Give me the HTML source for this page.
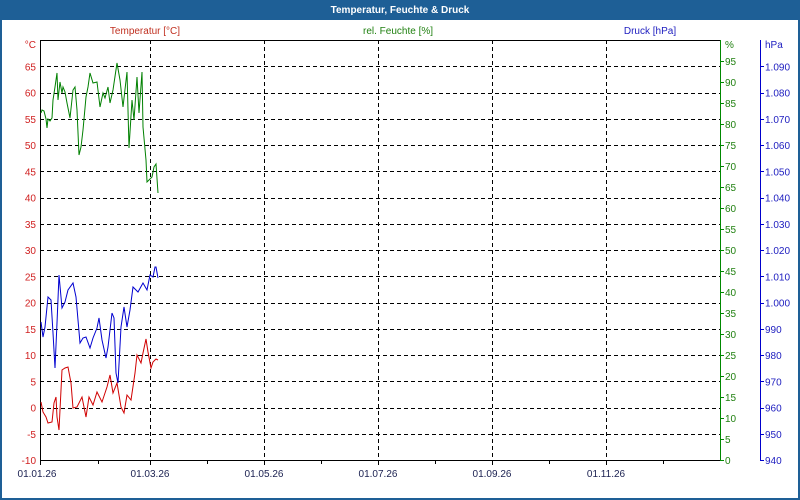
<!DOCTYPE html>
<html><head><meta charset="utf-8"><style>
html,body{margin:0;padding:0;width:800px;height:500px;overflow:hidden;background:#fff}
svg{display:block}
text{font-family:"Liberation Sans",sans-serif;font-size:10px}
</style></head><body>
<svg id="s" width="800" height="500" xmlns="http://www.w3.org/2000/svg">
<rect x="0" y="0" width="800" height="500" fill="#1e5f96"/>
<rect x="2" y="20" width="796" height="478" fill="#fff"/>
<text x="400" y="13" text-anchor="middle" fill="#fff" font-weight="bold" style="font-size:10px">Temperatur, Feuchte &amp; Druck</text>
<text x="145" y="34" text-anchor="middle" fill="#c03020">Temperatur [°C]</text>
<text x="398" y="34" text-anchor="middle" fill="#208010">rel. Feuchte [%]</text>
<text x="650" y="34" text-anchor="middle" fill="#2020c0">Druck [hPa]</text>
<g id="g"></g>
</svg>
<script>
var g=document.getElementById('g'),h='';
function ty(v){return 460-(v+10)*5.25}
for(var v=-5;v<=65;v+=5){var y=Math.round(ty(v))+.5;h+='<line x1="40" y1="'+y+'" x2="720" y2="'+y+'" stroke="#000" stroke-dasharray="4,3"/>';}
[150,264,378,492,606].forEach(function(x){h+='<line x1="'+(x+.5)+'" y1="40" x2="'+(x+.5)+'" y2="460" stroke="#000" stroke-dasharray="4,3"/>';});
h+='<line x1="40.5" y1="40" x2="40.5" y2="461" stroke="#000"/><line x1="40" y1="460.5" x2="721" y2="460.5" stroke="#000"/><line x1="40" y1="40.5" x2="720" y2="40.5" stroke="#000"/>';
h+='<line x1="720.5" y1="40" x2="720.5" y2="461" stroke="#080"/><line x1="760.5" y1="40" x2="760.5" y2="461" stroke="#00c"/>';
for(var v=-10;v<=65;v+=5){h+='<text x="36" y="'+(ty(v)+4)+'" text-anchor="end" fill="#d02020">'+v+'</text>';}
h+='<text x="36" y="48" text-anchor="end" fill="#d02020">°C</text>';
for(var v=0;v<=95;v+=5){var y=460-v*4.2;h+='<line x1="720" y1="'+(Math.round(y)+.5)+'" x2="724" y2="'+(Math.round(y)+.5)+'" stroke="#080"/><text x="725" y="'+(y+4)+'" fill="#208010">'+v+'</text>';}
h+='<text x="725" y="48" fill="#208010">%</text>';
for(var v=940;v<=1090;v+=10){var y=460-(v-940)*2.625;var s=v>=1000?('1.'+('00'+(v-1000)).slice(-3)):v;h+='<line x1="760" y1="'+(Math.round(y)+.5)+'" x2="764" y2="'+(Math.round(y)+.5)+'" stroke="#00c"/><text x="765" y="'+(y+4)+'" fill="#2020c0">'+s+'</text>';}
h+='<text x="765" y="48" fill="#2020c0">hPa</text>';
[40,150,264,378,492,606].forEach(function(x){h+='<line x1="'+(x+.5)+'" y1="460" x2="'+(x+.5)+'" y2="465" stroke="#000"/>';});
[98,207,321,435,549,663].forEach(function(x){h+='<line x1="'+(x+.5)+'" y1="460" x2="'+(x+.5)+'" y2="464" stroke="#000"/>';});
['01.01.26','01.03.26','01.05.26','01.07.26','01.09.26','01.11.26'].forEach(function(t,i){var x=[37,150,264,378,492,606][i];h+='<text x="'+x+'" y="477" text-anchor="middle" fill="#1a2050">'+t+'</text>';});
var G="41,113 42,110 44,111 46,119 47,128 48,119 50,121 52,118 53,100 55,87 57,73 58,100 60,82 62,93 63,87 65,92 67,103 70,118 73,90 75,87 77,110 79,155 81,147 83,130 86,97 88,87 90,73 93,83 97,82 100,107 103,93 105,98 108,87 110,103 113,90 117,63 120,80 123,107 127,72 129,148 132,100 134,120 137,77 139,113 142,72 143,127 146,160 147,182 149,180 152,177 154,167 156,164 158,193";
var B="41,322 43,337 45,327 48,297 51,300 53,333 55,368 57,323 59,275 62,308 65,302 68,290 73,283 76,297 80,343 83,338 86,337 90,348 93,338 97,328 99,318 102,340 106,358 108,347 112,313 114,318 116,373 118,383 121,327 124,307 127,327 130,310 133,287 138,292 143,283 147,290 150,275 153,277 155,267 156,267 158,278";
var R="41,402 43,412 46,417 48,423 52,422 54,403 56,397 57,417 59,430 62,370 65,368 68,367 71,383 73,408 77,407 82,397 86,417 89,397 93,405 97,392 102,402 107,387 110,375 113,393 117,383 121,407 124,413 127,395 131,400 135,373 137,355 141,363 143,353 146,339 148,352 151,368 153,362 156,359 158,360";
h+='<polyline points="'+G+'" fill="none" stroke="#008000"/><polyline points="'+B+'" fill="none" stroke="#0000d0"/><polyline points="'+R+'" fill="none" stroke="#d00000"/>';
g.innerHTML=h;
</script>
</body></html>
